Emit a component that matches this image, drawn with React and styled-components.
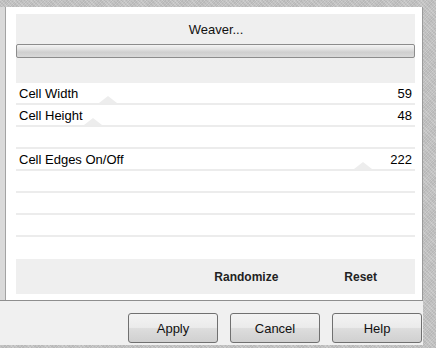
import React from "react";
import styled, { createGlobalStyle } from "styled-components";

const Global = createGlobalStyle`
  html, body { margin: 0; padding: 0; }
  body {
    width: 436px; height: 348px; overflow: hidden;
    font-family: "Liberation Sans", Arial, sans-serif;
    background-color: #c3c3c3;
    background-image:
      repeating-linear-gradient(45deg, rgba(255,255,255,0.18) 0 1px, transparent 1px 3px),
      repeating-linear-gradient(-45deg, rgba(0,0,0,0.06) 0 1px, transparent 1px 2px);
  }
`;

const Screen = styled.div`
  width: 436px;
  height: 348px;
  padding-top: 7px;
  box-sizing: border-box;
`;

const Window = styled.div`
  width: 423px;
  height: 338px;
  display: flex;
  flex-direction: column;
  background: #f0f0f0;
`;

const Upper = styled.div`
  display: flex;
  height: 293px;
  border-bottom: 1px solid #8e8e8e;
`;

const LeftStrip = styled.div`
  width: 5px;
  background: #dadada;
  border-right: 1px solid #a3a3a3;
`;

const Panel = styled.div`
  flex: 1;
  background: #ffffff;
  border-right: 1px solid #9a9a9a;
  padding: 7px 7px 0 10px;
  display: flex;
  flex-direction: column;
`;

const Header = styled.div`
  height: 69px;
  background: #efefef;
  display: flex;
  flex-direction: column;
`;

const Title = styled.div`
  height: 30px;
  display: flex;
  align-items: center;
  justify-content: center;
  font-size: 13px;
  color: #111;
  padding-left: 1px;
`;

const Bar = styled.div`
  height: 12px;
  border: 1px solid #8c8c8c;
  border-radius: 2px;
  background: linear-gradient(#f4f4f4 0%, #e2e2e2 35%, #cfcfcf 60%, #d9d9d9 100%);
`;

const Row = styled.div`
  position: relative;
  height: 20px;
  border-bottom: 2px solid ${(p) => (p.$last ? "transparent" : "#ececec")};
  display: flex;
  align-items: center;
  justify-content: space-between;
  padding: 0 3px 0 3px;
  font-size: 13px;
  color: #000;
`;

const Label = styled.span`
  position: relative;
  z-index: 1;
`;

const Value = styled.span`
  position: relative;
  z-index: 1;
  background: #fff;
  padding-left: 3px;
`;

const Thumb = styled.div`
  position: absolute;
  bottom: 0;
  left: ${(p) => p.$x}px;
  width: 0;
  height: 0;
  border-left: 9px solid transparent;
  border-right: 9px solid transparent;
  border-bottom: 7px solid #ededed;
`;

const Footer = styled.div`
  height: 35px;
  background: #efefef;
  display: flex;
  align-items: center;
  justify-content: flex-end;
  gap: 66px;
  padding-right: 38px;
  font-size: 12px;
  font-weight: bold;
  color: #222;
`;

const ButtonBar = styled.div`
  flex: 1;
  display: flex;
  justify-content: flex-end;
  align-items: flex-start;
  gap: 12px;
  padding: 12px 1px 0 0;
`;

const Button = styled.button`
  width: 90px;
  height: 30px;
  border: 1px solid #707070;
  border-radius: 3px;
  background: linear-gradient(#f3f3f3 0%, #ebebeb 48%, #dddddd 52%, #d0d0d0 100%);
  font-family: "Liberation Sans", Arial, sans-serif;
  font-size: 13px;
  color: #111;
  padding: 0;
`;

const rows = [
  { label: "Cell Width", value: "59", thumb: 83 },
  { label: "Cell Height", value: "48", thumb: 68 },
  {},
  { label: "Cell Edges On/Off", value: "222", thumb: 338 },
  {},
  {},
  {},
  {},
];

export default function App() {
  return (
    <>
      <Global />
      <Screen>
        <Window>
          <Upper>
            <LeftStrip />
            <Panel>
              <Header>
                <Title>Weaver...</Title>
                <Bar />
              </Header>
              {rows.map((r, i) => (
                <Row key={i} $last={i === rows.length - 1}>
                  {r.thumb !== undefined && <Thumb $x={r.thumb} />}
                  <Label>{r.label}</Label>
                  {r.value && <Value>{r.value}</Value>}
                </Row>
              ))}
              <Footer>
                <span>Randomize</span>
                <span>Reset</span>
              </Footer>
            </Panel>
          </Upper>
          <ButtonBar>
            <Button>Apply</Button>
            <Button>Cancel</Button>
            <Button>Help</Button>
          </ButtonBar>
        </Window>
      </Screen>
    </>
  );
}
